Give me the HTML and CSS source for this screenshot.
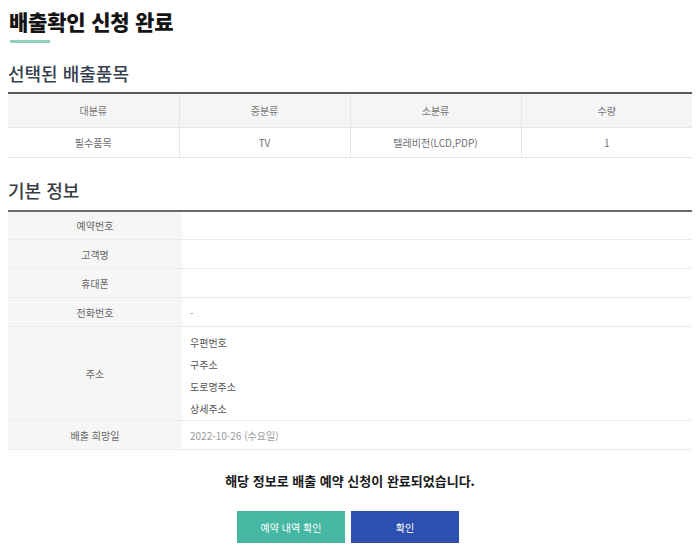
FILE: index.html
```html
<!DOCTYPE html>
<html lang="ko">
<head>
<meta charset="utf-8">
<title>배출확인 신청 완료</title>
<link rel="stylesheet" href="styles.css">
</head>
<body>
<div class="page">
  <h1 class="title">배출확인 신청 완료</h1>
  <div class="title-bar"></div>

  <h2 class="section">선택된 배출품목</h2>
  <table class="items">
    <thead>
      <tr><th>대분류</th><th>중분류</th><th>소분류</th><th>수량</th></tr>
    </thead>
    <tbody>
      <tr><td>필수품목</td><td>TV</td><td>텔레비전(LCD,PDP)</td><td>1</td></tr>
    </tbody>
  </table>

  <h2 class="section section-2">기본 정보</h2>
  <table class="info">
    <tbody>
      <tr><th>예약번호</th><td></td></tr>
      <tr><th>고객명</th><td></td></tr>
      <tr><th>휴대폰</th><td></td></tr>
      <tr><th>전화번호</th><td class="muted">-</td></tr>
      <tr class="addr-row"><th>주소</th><td class="addr-cell">
        <div class="addr">
          <span>우편번호</span>
          <span>구주소</span>
          <span>도로명주소</span>
          <span>상세주소</span>
        </div>
      </td></tr>
      <tr><th>배출 희망일</th><td class="muted">2022-10-26 (수요일)</td></tr>
    </tbody>
  </table>

  <p class="message">해당 정보로 배출 예약 신청이 완료되었습니다.</p>
  <div class="actions">
    <button class="btn btn-teal" type="button">예약 내역 확인</button>
    <button class="btn btn-blue" type="button">확인</button>
  </div>
</div>
</body>
</html>
```

FILE: styles.css
```css
* { box-sizing: border-box; }
html, body { margin: 0; padding: 0; background: #fff; }
body {
  font-family: "Noto Sans CJK KR", "Noto Sans", sans-serif;
  color: #333;
}
.page {
  width: 700px;
  padding: 6px 8px 0 8px;
}
.title {
  margin: 0;
  font-size: 21px;
  line-height: 30px;
  font-weight: 900;
  color: #141414;
  letter-spacing: -0.2px;
  padding-left: 1px;
}
.title-bar {
  margin-top: 4px;
  margin-left: 2px;
  width: 40px;
  height: 3px;
  background: #8fd0c0;
}
.section {
  margin: 18px 0 0 0;
  font-size: 18px;
  line-height: 24px;
  font-weight: 500;
  color: #36414f;
}
.section-2 { margin-top: 20px; color: #3a3d44; }

table {
  width: 684px;
  border-collapse: collapse;
  table-layout: fixed;
  font-size: 10px;
}
.items {
  margin-top: 7px;
  border-top: 2px solid #5a5a5a;
}
.items th {
  height: 34px;
  background: #f5f5f5;
  font-weight: 400;
  color: #777;
  border-bottom: 1px solid #e6e6e6;
  border-left: 1px solid #e6e6e6;
}
.items td {
  height: 30px;
  text-align: center;
  color: #707070;
  border-bottom: 1px solid #e6e6e6;
  border-left: 1px solid #e6e6e6;
}
.items th:first-child, .items td:first-child { border-left: none; }

.info {
  margin-top: 8px;
  border-top: 2px solid #6a6a6a;
}
.info th {
  width: 174px;
  height: 29px;
  background: #f6f6f6;
  font-weight: 400;
  color: #666;
  border-bottom: 1px solid #ebebeb;
}
.info td {
  height: 29px;
  padding-left: 8px;
  color: #888;
  border-bottom: 1px solid #ebebeb;
}
.info td.muted { color: #999; }
.info td.addr-cell { padding: 0 0 0 8px; }
.addr {
  display: flex;
  flex-direction: column;
  padding: 5px 0 0 0;
}
.addr span {
  line-height: 22px;
  color: #555;
}
.message {
  margin: 21px 0 0 0;
  text-align: center;
  font-size: 13px;
  line-height: 20px;
  font-weight: 700;
  color: #1a1a1a;
}
.actions {
  margin-top: 20px;
  display: flex;
  justify-content: center;
  gap: 6px;
  padding-right: 4px;
}
.btn {
  width: 108px;
  height: 32px;
  border: none;
  color: #fff;
  font-family: inherit;
  font-size: 10px;
  cursor: pointer;
}
.btn-teal { background: #45b7a2; }
.btn-blue { background: #2d50b0; }
```
